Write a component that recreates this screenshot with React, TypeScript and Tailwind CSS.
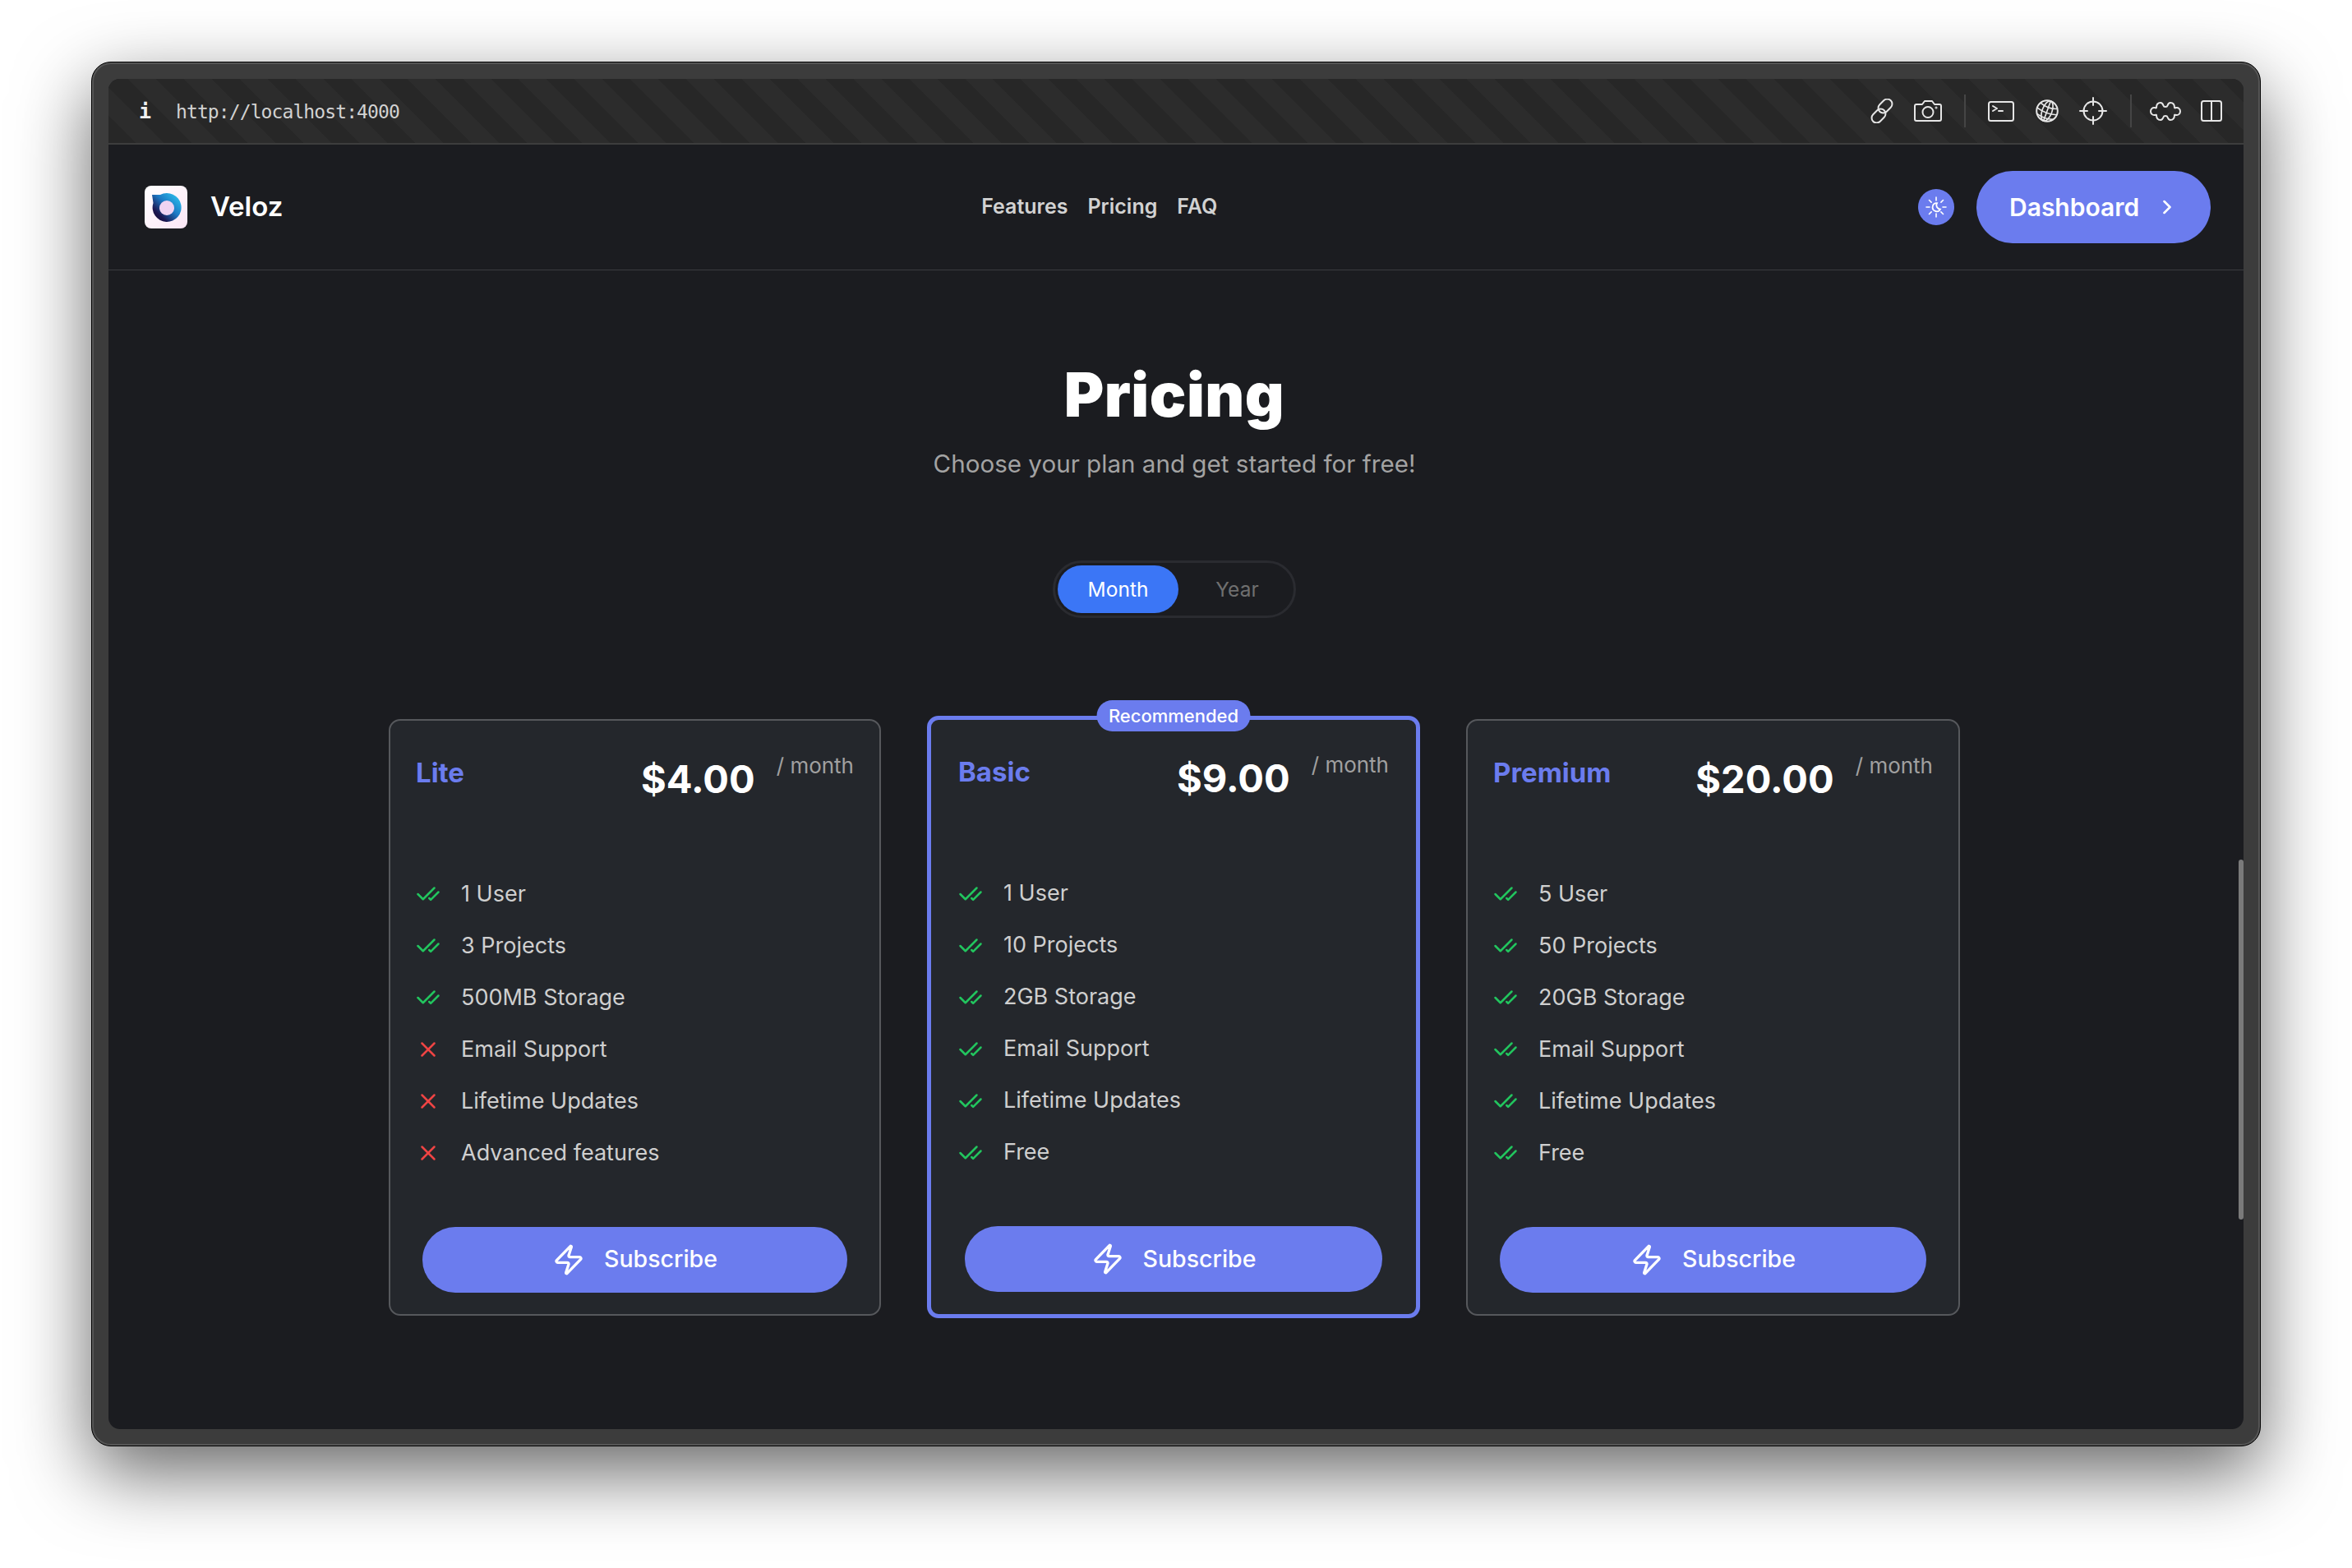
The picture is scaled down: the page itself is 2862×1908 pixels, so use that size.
import React from 'react';
import { CheckCheck, ChevronRight, X, Zap } from 'lucide-react';

const plans = [
  {
    name: 'Lite',
    price: '$4.00',
    features: [
      ['1 User', true],
      ['3 Projects', true],
      ['500MB Storage', true],
      ['Email Support', false],
      ['Lifetime Updates', false],
      ['Advanced features', false],
    ],
  },
  {
    name: 'Basic',
    price: '$9.00',
    recommended: true,
    features: [
      ['1 User', true],
      ['10 Projects', true],
      ['2GB Storage', true],
      ['Email Support', true],
      ['Lifetime Updates', true],
      ['Free', true],
    ],
  },
  {
    name: 'Premium',
    price: '$20.00',
    features: [
      ['5 User', true],
      ['50 Projects', true],
      ['20GB Storage', true],
      ['Email Support', true],
      ['Lifetime Updates', true],
      ['Free', true],
    ],
  },
] as { name: string; price: string; recommended?: boolean; features: [string, boolean][] }[];

const Logo = () => (
  <svg width="52" height="52" viewBox="0 0 52 52" className="shrink-0">
    <defs>
      <linearGradient id="logoBg" x1="0" y1="0" x2="1" y2="1">
        <stop offset="0" stopColor="#ffffff" />
        <stop offset="1" stopColor="#fbe6f6" />
      </linearGradient>
      <linearGradient id="logoRing" x1="1" y1="0" x2="0" y2="1">
        <stop offset="0" stopColor="#2fd0f5" />
        <stop offset="0.45" stopColor="#1c78c4" />
        <stop offset="0.75" stopColor="#1b1650" />
        <stop offset="1" stopColor="#14082e" />
      </linearGradient>
    </defs>
    <rect width="52" height="52" rx="8" fill="url(#logoBg)" />
    <path d="M9 11 L19 11 A17.5 17.5 0 1 1 10.5 21 Z" fill="url(#logoRing)" />
    <circle cx="27" cy="27" r="9" fill="#efd3f2" />
  </svg>
);

const ToolIcon = ({ w, h, children }: { w: number; h: number; children: React.ReactNode }) => (
  <svg width={w} height={h} viewBox={`0 0 ${w} ${h}`} fill="none" stroke="#e6e6e6" strokeWidth="2" strokeLinecap="round" strokeLinejoin="round" className="shrink-0">
    {children}
  </svg>
);

const ThemeIcon = () => (
  <svg width="26" height="26" viewBox="0 0 26 26" fill="none" stroke="white" strokeWidth="1.6" strokeLinecap="round">
    <path d="M13 1v4M13 21v4M1 13h4M21 13h4M4.5 4.5l2.6 2.6M18.9 18.9l2.6 2.6M4.5 21.5l2.6-2.6M18.9 7.1l2.6-2.6" />
    <path d="M14 8.2a5 5 0 1 0 4 7.4 5 5 0 0 1-4-7.4z" strokeWidth="1.8" />
  </svg>
);

const Toolbar = () => (
  <div className="h-[80px] shrink-0 flex items-center border-b-2 border-[#3d3d3d] bg-[repeating-linear-gradient(45deg,#272727_0px,#272727_24px,#2c2c2c_24px,#2c2c2c_48px)] pl-[37px] pr-[26px]">
    <span className="font-['DejaVu_Sans_Mono',monospace] font-bold text-[25px] text-[#efefef] w-[45px] mt-[2px]">i</span>
    <span className="font-['DejaVu_Sans_Mono',monospace] text-[23px] tracking-[-0.9px] text-[#d2d2d2] mt-[3px]">http://localhost:4000</span>
    <div className="ml-auto flex items-center">
      <ToolIcon w={30} h={30}>
        <rect x="13" y="-0.5" width="12" height="19" rx="6" transform="rotate(45 19 9)" />
        <rect x="5" y="11.5" width="12" height="19" rx="6" transform="rotate(45 11 21)" />
      </ToolIcon>
      <div className="ml-[24px]">
        <ToolIcon w={34} h={26}>
          <path d="M3 5h7l3-4h9l3 4h6a2 2 0 0 1 2 2v16a2 2 0 0 1-2 2H3a2 2 0 0 1-2-2V7a2 2 0 0 1 2-2z" />
          <circle cx="17" cy="14.5" r="6.5" />
          <circle cx="27" cy="9" r="0.5" />
        </ToolIcon>
      </div>
      <div className="ml-[27px] w-[2px] h-[40px] bg-[#454545]" />
      <div className="ml-[27px]">
        <ToolIcon w={32} h={25}>
          <rect x="1" y="1" width="30" height="23" rx="2.5" />
          <path d="M6 6l5 3-5 3M13 12h5" />
        </ToolIcon>
      </div>
      <div className="ml-[26px]">
        <ToolIcon w={28} h={28}>
          <circle cx="14" cy="14" r="12.8" />
          <g transform="rotate(20 14 14)" strokeWidth="1.7">
            <ellipse cx="14" cy="14" rx="6" ry="12.8" />
            <path d="M14 1.2v25.6" />
            <path d="M3.5 7.5q10.5 4 21 0M1.5 14.5q12.5 4 25 0M4 21.5q10 3 20 0" />
          </g>
        </ToolIcon>
      </div>
      <div className="ml-[25px]">
        <ToolIcon w={34} h={34}>
          <circle cx="17" cy="17" r="11.5" />
          <path d="M17 1v9M17 24v9M1 17h9M24 17h9" />
        </ToolIcon>
      </div>
      <div className="ml-[28px] w-[2px] h-[40px] bg-[#454545]" />
      <div className="ml-[22px]">
        <ToolIcon w={38} h={25}>
          <path d="M8 8C8 4 10 2 13 2C15 2 16 4 16.5 5.5C17 7.5 21 7.5 21.5 5.5C22 4 23 2 25 2C28 2 30 4 30 8C30 8.5 31 8.5 32 8C35 7.5 37 10 37 12.5C37 15 35 17.5 32 17C31 16.7 30 16.5 30 17C30 21 28 23 25 23C23 23 22 21 21.5 19.5C21 17.5 17 17.5 16.5 19.5C16 21 15 23 13 23C10 23 8 21 8 17C8 16.5 7 16.7 6 17C3 17.5 1 15 1 12.5C1 10 3 7.5 6 8C7 8.5 8 8.5 8 8Z" />
        </ToolIcon>
      </div>
      <div className="ml-[24px]">
        <ToolIcon w={26} h={26}>
          <rect x="1" y="1" width="24" height="24" rx="2.5" />
          <path d="M13 1v24" />
        </ToolIcon>
      </div>
    </div>
  </div>
);

const Navbar = () => (
  <div className="h-[153px] shrink-0 flex items-center justify-between border-b border-[#3a3b3f] pl-[44px] pr-[40px]">
    <div className="flex items-center gap-[28px]">
      <Logo />
      <span className="text-[33px] font-semibold text-white">Veloz</span>
    </div>
    <div className="flex items-center gap-[24px] text-[25px] font-semibold text-[#d2d2d2] ml-[-3px]">
      <span>Features</span>
      <span>Pricing</span>
      <span>FAQ</span>
    </div>
    <div className="flex items-center gap-[27px]">
      <div className="w-[44px] h-[44px] rounded-full bg-[#6b7cee] flex items-center justify-center">
        <ThemeIcon />
      </div>
      <button className="h-[88px] w-[285px] rounded-full bg-[#6b7cee] flex items-center pl-[40px] text-white text-[30px] font-semibold">
        <span>Dashboard</span>
        <ChevronRight size={28} strokeWidth={2.2} className="ml-[20px]" />
      </button>
    </div>
  </div>
);

const PlanCard = ({ plan }: { plan: (typeof plans)[number] }) => (
  <div
    className={
      plan.recommended
        ? 'relative flex flex-col rounded-[14px] bg-[#24272c] border-[5px] border-[#6b7cee] h-[733px] px-[33px]'
        : 'relative flex flex-col rounded-[14px] bg-[#24272c] border-2 border-[#56585c] h-[726px] px-[31px]'
    }
  >
    {plan.recommended && (
      <div className="absolute top-[-24px] left-1/2 -translate-x-1/2 h-[38px] w-[187px] rounded-full bg-[#6b7cee] flex items-center justify-center text-[22px] font-medium text-white">
        Recommended
      </div>
    )}
    <div className="h-[180px] shrink-0 pt-[44px] flex items-start">
      <span className="text-[33px] font-bold text-[#6b7cee] leading-[38px]">{plan.name}</span>
      <span className="ml-auto text-[47px] font-bold text-white leading-[50px] mt-[2px]">{plan.price}</span>
      <span className="ml-[26px] text-[26px] text-[#a0a0a0] leading-[30px] mt-[-4px]">/ month</span>
    </div>
    <div className="flex flex-col">
      {plan.features.map(([label, included]) => (
        <div key={label} className="h-[63px] flex items-center gap-[25px]">
          {included ? (
            <CheckCheck size={30} color="#22c55e" className="shrink-0" />
          ) : (
            <X size={30} color="#ef4444" className="shrink-0" />
          )}
          <span className="text-[27px] text-[#cfcfcf]">{label}</span>
        </div>
      ))}
    </div>
    <button className="mt-[58px] h-[80px] mx-[8px] rounded-full bg-[#6b7cee] flex items-center justify-center gap-[23px] text-white text-[28.5px] font-medium">
      <Zap size={40} strokeWidth={2} />
      <span>Subscribe</span>
    </button>
  </div>
);

export default function App() {
  return (
    <div className="w-[2862px] h-[1908px] bg-white pl-[111px] pt-[75px] font-['Inter','Noto_Sans',sans-serif] overflow-hidden">
      <div className="w-[2640px] h-[1685px] rounded-[24px] bg-[#3c3c3c] p-[20px] border border-black shadow-[0_32px_90px_rgba(0,0,0,0.6),inset_0_0_0_2px_#565656]">
        <div className="relative w-full h-full rounded-[14px] overflow-hidden bg-[#1b1c20] flex flex-col">
          <Toolbar />
          <Navbar />
          <div className="flex flex-col items-center pr-[4px]">
            <h1 className="mt-[108px] text-[74px] leading-[86px] font-black text-white tracking-[0.5px]">Pricing</h1>
            <p className="mt-[21px] text-[29.6px] leading-[40px] text-[#a3a3a3]">Choose your plan and get started for free!</p>
            <div className="mt-[98px] w-[296px] h-[70px] rounded-full border-[3px] border-[#2a2b30] p-[3px] flex items-center text-[24.5px]">
              <div className="w-[147px] h-[58px] rounded-full bg-[#3b76f6] text-white flex items-center justify-center">Month</div>
              <div className="flex-1 pl-[6px] text-center text-[#6f6f6f]">Year</div>
            </div>
            <div className="mt-[119px] grid grid-cols-[599px_600px_601px] gap-[56px] items-center">
              {plans.map((plan) => (
                <PlanCard key={plan.name} plan={plan} />
              ))}
            </div>
          </div>
          <div className="absolute right-0 top-[950px] w-[6px] h-[438px] rounded-full bg-[#7a7a7a]" />
        </div>
      </div>
    </div>
  );
}
